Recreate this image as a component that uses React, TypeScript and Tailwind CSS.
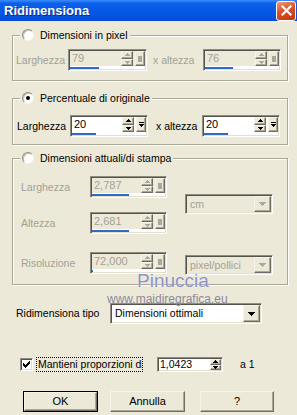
import React from 'react';

const sunken =
  'border border-t-[#8f8d80] border-l-[#8f8d80] border-r-white border-b-white shadow-[inset_1px_1px_0_#55544c,inset_-1px_-1px_0_#e2dfcf]';
const raised =
  'border border-t-[#f6f4ea] border-l-[#f6f4ea] border-r-[#6f6d64] border-b-[#6f6d64] shadow-[inset_-1px_-1px_0_#aca899] bg-[#ECE9D8]';
const grayText = 'text-[#a3a196]';

const Up = ({ c }: { c: string }) => (
  <svg width="5" height="3" viewBox="0 0 5 3" fill={c}>
    <path d="M2 0h1v1h1v1h1v1H0V2h1V1h1z" />
  </svg>
);

const Down = ({ c }: { c: string }) => (
  <svg width="5" height="3" viewBox="0 0 5 3" fill={c}>
    <path d="M0 0h5v1H4v1H3v1H2V2H1V1H0z" />
  </svg>
);

const ComboArrow = ({ c }: { c: string }) => (
  <svg width="7" height="4" viewBox="0 0 7 4" fill={c}>
    <path d="M0 0h7v1H6v1H5v1H4v1H3V3H2V2H1V1H0z" />
  </svg>
);

function Spinner({ c }: { c: string }) {
  return (
    <div className="w-[12px] h-full flex flex-col">
      <div className={`${raised} flex-1 flex items-center justify-center`}>
        <Up c={c} />
      </div>
      <div className={`${raised} flex-1 flex items-center justify-center`}>
        <Down c={c} />
      </div>
    </div>
  );
}

interface FieldProps {
  value: string;
  w: string;
  bar: number;
  disabled?: boolean;
}

function NumField({ value, w, bar, disabled }: FieldProps) {
  const c = disabled ? '#aca899' : '#000';
  return (
    <div className={`${sunken} ${w} h-[22px] flex flex-col p-[1px] ${disabled ? 'bg-[#ECE9D8]' : 'bg-white'}`}>
      <div className="flex-1 flex min-h-0">
        <span className={`flex-1 pl-[2px] pt-[2px] text-[11px] leading-none ${disabled ? grayText : 'text-black'}`}>
          {value}
        </span>
        <Spinner c={c} />
        <div className={`${raised} w-[10px] h-full ml-[2px] flex flex-col items-center justify-center gap-[1px]`}>
          {disabled ? (
            <span className="w-[4px] h-[6px] bg-[#aca899]" />
          ) : (
            <>
              <span className="w-[5px] h-[1px] bg-black" />
              <Down c="#000" />
            </>
          )}
        </div>
      </div>
      <div className="h-[3px] flex bg-white">
        <div className="h-[2px] mt-[1px] bg-[#316ac5]" style={{ width: `${bar}%` }} />
      </div>
    </div>
  );
}

function Combo({ text, w, h, disabled }: { text: string; w: string; h: string; disabled?: boolean }) {
  return (
    <div className={`${sunken} ${w} ${h} flex items-stretch p-[1px] ${disabled ? 'bg-[#ECE9D8]' : 'bg-white'}`}>
      <span className={`flex-1 flex items-center pl-[3px] ${disabled ? grayText : 'text-black'}`}>{text}</span>
      <div className={`${raised} w-[17px] flex items-center justify-center`}>
        <ComboArrow c={disabled ? '#aca899' : '#000'} />
      </div>
    </div>
  );
}

function Radio({ checked }: { checked?: boolean }) {
  return (
    <span className="w-[12px] h-[12px] rounded-full bg-white border border-t-[#8f8d80] border-l-[#8f8d80] border-r-[#f4f2ea] border-b-[#f4f2ea] shadow-[inset_1px_1px_0_#c9c6b8] flex items-center justify-center">
      {checked && <span className="w-[4px] h-[4px] rounded-full bg-black" />}
    </span>
  );
}

function Group({
  label,
  checked,
  className,
  children,
}: {
  label: string;
  checked?: boolean;
  className: string;
  children: React.ReactNode;
}) {
  return (
    <fieldset className={`border border-[#aca899] shadow-[inset_1px_1px_0_#fff,1px_1px_0_#fff] px-[3px] ${className}`}>
      <legend className="ml-[4px] px-[2px] bg-[#ECE9D8]">
        <span className="flex items-center gap-[6px] h-[14px] text-[10.5px] text-black">
          <Radio checked={checked} />
          <span>{label}</span>
        </span>
      </legend>
      {children}
    </fieldset>
  );
}

function Button({ label, w, ml, def }: { label: string; w: string; ml: string; def?: boolean }) {
  return (
    <div className={`${w} ${ml} h-[21px] ${def ? 'border border-black' : ''}`}>
      <div className={`${raised} w-full h-full flex items-center justify-center text-[11px]`}>{label}</div>
    </div>
  );
}

export default function App() {
  return (
    <div className="relative w-[297px] h-[415px] overflow-hidden bg-[#ECE9D8] font-['Liberation_Sans',Arial,sans-serif] text-[10.5px] text-black leading-none">
      {/* Title bar */}
      <div className="h-[21px] flex items-center justify-between pl-[4px] pr-[1px] bg-[linear-gradient(180deg,#3a8cff_0%,#0b5fea_16%,#0558e6_55%,#0452df_85%,#0a48cf_100%)]">
        <span className="text-white font-bold text-[13px] [text-shadow:1px_1px_0_#0a2a8a]">Ridimensiona</span>
        <div className="w-[20px] h-[20px] rounded-[3px] border border-white bg-[linear-gradient(160deg,#ec9a7c_0%,#d9542a_45%,#c0380c_100%)] flex items-center justify-center">
          <svg width="11" height="11" viewBox="0 0 11 11">
            <path d="M1.5 1.5 L9.5 9.5 M9.5 1.5 L1.5 9.5" stroke="#fff" strokeWidth="2.2" strokeLinecap="square" />
          </svg>
        </div>
      </div>

      <div className="pl-[12px] pr-[9px] flex flex-col">
        {/* Dimensioni in pixel */}
        <Group label="Dimensioni in pixel" className="mt-[7px] pt-[7px] pb-[9px]">
          <div className="flex items-center">
            <span className={`w-[52px] ${grayText}`}>Larghezza</span>
            <NumField value="79" w="w-[79px]" bar={38} disabled />
            <span className={`ml-[6px] w-[50px] ${grayText}`}>x altezza</span>
            <NumField value="76" w="w-[78px]" bar={38} disabled />
          </div>
        </Group>

        {/* Percentuale di originale */}
        <Group label="Percentuale di originale" checked className="mt-[10px] pt-[10px] pb-[7px]">
          <div className="flex items-center">
            <span className="w-[54px] pl-[1px]">Larghezza</span>
            <NumField value="20" w="w-[78px]" bar={32} />
            <span className="ml-[8px] w-[46px]">x altezza</span>
            <NumField value="20" w="w-[78px]" bar={32} />
          </div>
        </Group>

        {/* Dimensioni attuali/di stampa */}
        <Group label="Dimensioni attuali/di stampa" className="mt-[6px] pt-[11px] pb-[9px]">
          <div className="flex">
            <div className="flex flex-col">
              <div className="flex items-center">
                <span className={`w-[74px] pl-[5px] ${grayText}`}>Larghezza</span>
                <NumField value="2,787" w="w-[77px]" bar={50} disabled />
              </div>
              <div className="flex items-center mt-[14px]">
                <span className={`w-[74px] pl-[5px] ${grayText}`}>Altezza</span>
                <NumField value="2,681" w="w-[77px]" bar={50} disabled />
              </div>
              <div className="flex items-center mt-[18px]">
                <span className={`w-[74px] pl-[5px] ${grayText}`}>Risoluzione</span>
                <NumField value="72,000" w="w-[77px]" bar={1} disabled />
              </div>
            </div>
            <div className="flex flex-col ml-[18px]">
              <div className="mt-[18px]">
                <Combo text="cm" w="w-[88px]" h="h-[20px]" disabled />
              </div>
              <div className="mt-[41px]">
                <Combo text="pixel/pollici" w="w-[88px]" h="h-[20px]" disabled />
              </div>
            </div>
          </div>
        </Group>

        {/* Ridimensiona tipo */}
        <div className="flex items-center mt-[18px]">
          <span className="w-[98px] pl-[4px]">Ridimensiona tipo</span>
          <Combo text="Dimensioni ottimali" w="w-[152px]" h="h-[21px]" />
        </div>

        {/* Mantieni proporzioni */}
        <div className="flex items-center mt-[33px] h-[15px]">
          <span className={`${sunken} ml-[8px] w-[13px] h-[13px] bg-white flex items-center justify-center`}>
            <svg width="7" height="7" viewBox="0 0 7 7" fill="#000">
              <path d="M0 2h1v1h1v1h1V3h1V2h1V1h1V0h1v3H6v1H5v1H4v1H3v1H2V6H1V5H0z" />
            </svg>
          </span>
          <span className="ml-[3px] w-[107px] h-[15px] border border-dotted border-black overflow-hidden whitespace-nowrap flex items-center pl-[1px]">
            Mantieni proporzioni di
          </span>
          <div className={`${sunken} ml-[14px] w-[66px] h-[15px] bg-white flex p-[1px]`}>
            <span className="flex-1 pl-[1px] flex items-center">1,0423</span>
            <div className="w-[11px] h-full flex flex-col">
              <div className={`${raised} flex-1 flex items-center justify-center`}>
                <Up c="#000" />
              </div>
              <div className={`${raised} flex-1 flex items-center justify-center`}>
                <Down c="#000" />
              </div>
            </div>
          </div>
          <span className="ml-[17px]">a 1</span>
        </div>

        {/* Buttons */}
        <div className="flex mt-[19px]">
          <Button label="OK" w="w-[75px]" ml="ml-[11px]" def />
          <Button label="Annulla" w="w-[75px]" ml="ml-[12px]" />
          <Button label="?" w="w-[74px]" ml="ml-[15px]" />
        </div>
      </div>

      {/* Watermark */}
      <span className="absolute left-[137px] top-[271px] text-[19px] text-[#8e91c6] [text-shadow:0_0_1px_#fff]">
        Pinuccia
      </span>
      <span className="absolute left-[107px] top-[293px] text-[12px] text-[#8a8a9c]">www.maidiregrafica.eu</span>
    </div>
  );
}
